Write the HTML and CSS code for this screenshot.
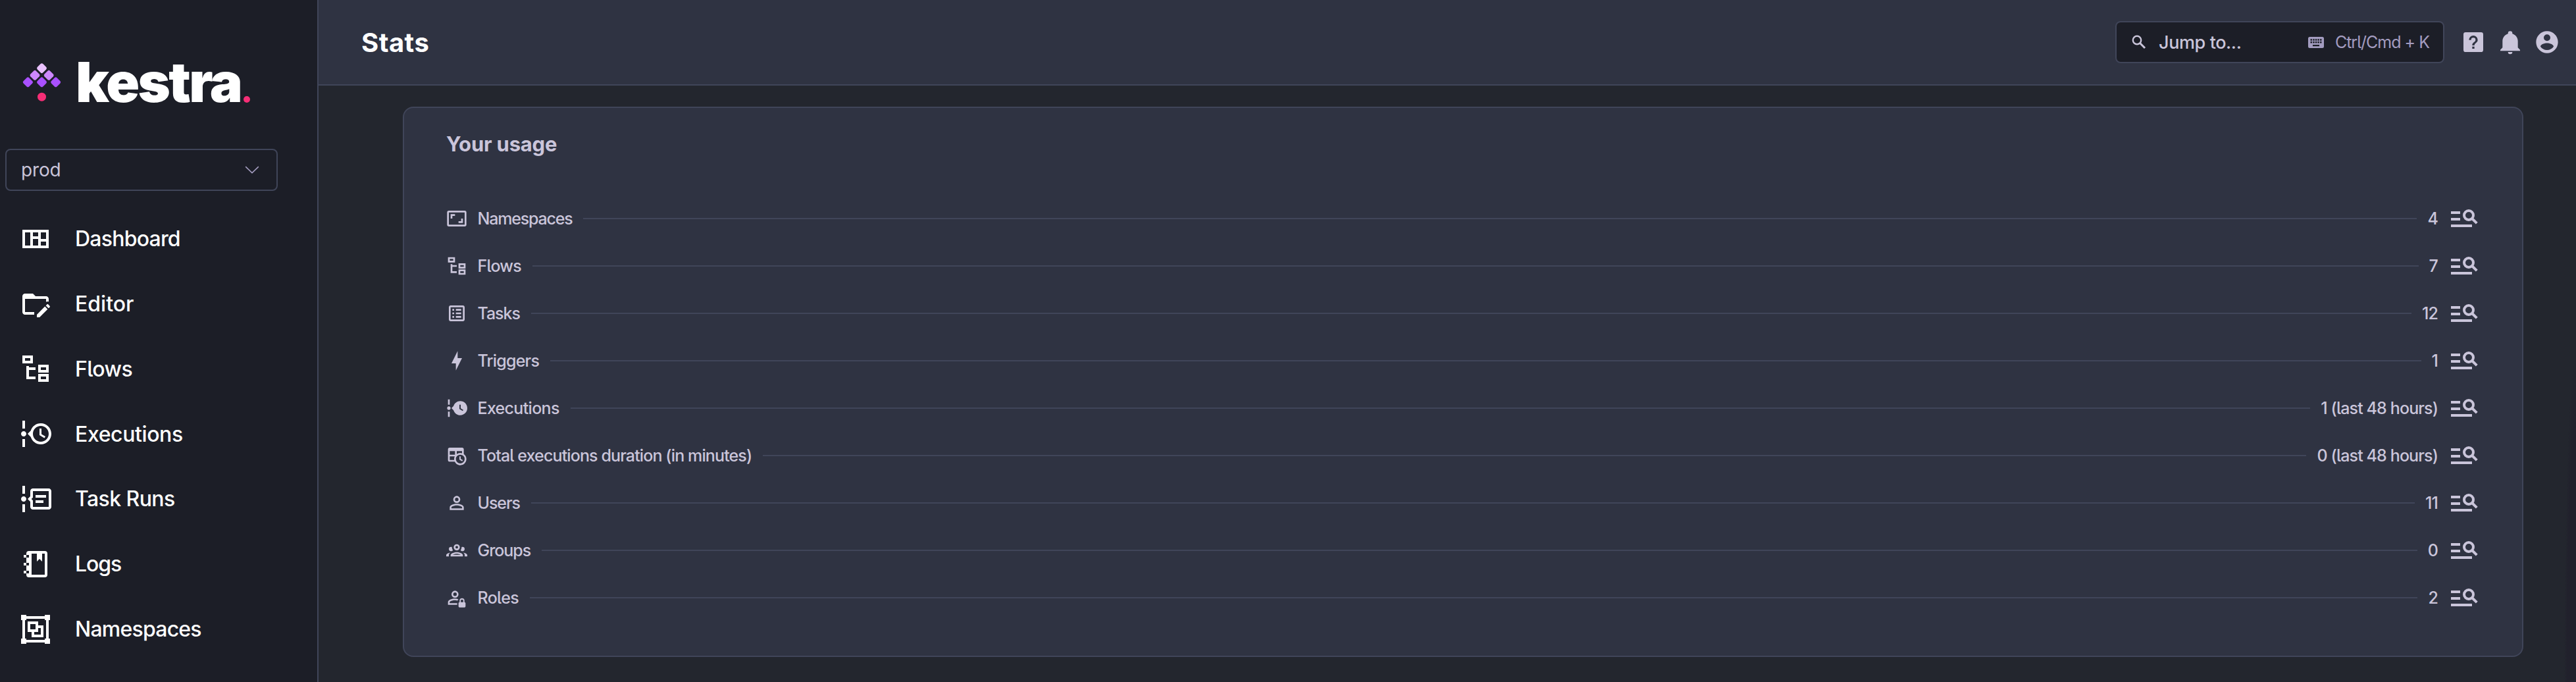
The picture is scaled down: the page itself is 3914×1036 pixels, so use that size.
FILE: index.html
```html
<!DOCTYPE html>
<html lang="en">
<head>
<meta charset="utf-8">
<title>Stats</title>
<link rel="stylesheet" href="styles.css">
</head>
<body>
<svg class="sprite" aria-hidden="true">
  <symbol id="i-tree" viewBox="0 0 24 24"><path d="M12 13H7V18H12V20H5V10H7V11H12V13M8 4V6H4V4H8M10 2H2V8H10V2M20 11V13H16V11H20M22 9H14V15H22V9M20 18V20H16V18H20M22 16H14V22H22V16Z"/></symbol>
  <symbol id="i-find" viewBox="0 0 44 36"><path d="M0 7H14V11H0ZM0 17H14V21H0ZM0 27H32V31H0Z"/><circle cx="27" cy="13" r="7" fill="none" stroke="currentColor" stroke-width="4"/><path d="M32 18L39.3 25.2" fill="none" stroke="currentColor" stroke-width="4"/></symbol>
</svg>
<div class="app">
  <aside class="sidebar">
    <div class="logo">
      <svg class="mark" viewBox="0 0 60 62">
        <g fill="#e9c1ff"><rect x="-6" y="-6" width="12" height="12" rx="2.6" transform="translate(29.5 9.7) rotate(45)"/></g>
        <g fill="#cd88ff"><rect x="-6" y="-6" width="12" height="12" rx="2.6" transform="translate(19 20.3) rotate(45)"/><rect x="-6" y="-6" width="12" height="12" rx="2.6" transform="translate(40.2 20.3) rotate(45)"/></g>
        <g fill="#a950ff"><rect x="-6" y="-6" width="12" height="12" rx="2.6" transform="translate(8.4 30.8) rotate(45)"/><rect x="-6" y="-6" width="12" height="12" rx="2.6" transform="translate(29.5 30.8) rotate(45)"/><rect x="-6" y="-6" width="12" height="12" rx="2.6" transform="translate(50.7 30.8) rotate(45)"/></g>
        <circle cx="29.5" cy="53.2" r="6.5" fill="#f62e76"/>
      </svg>
      <span class="wordmark">kestra</span><span class="dot"></span>
    </div>
    <div class="select"><span>prod</span><svg viewBox="0 0 22 12"><path d="M1.2 1.2L11 10.6L20.8 1.2"/></svg></div>
    <nav class="menu">
      <a><svg viewBox="0 0 24 24"><path fill-rule="evenodd" d="M2 5H22V19H2ZM4 7V17H8V7ZM10 7V10H14V7ZM10 12V17H14V12ZM16 7V12H20V7ZM16 14V17H20V14Z"/></svg><span>Dashboard</span></a>
      <a><svg viewBox="0 0 24 24"><path d="M4 18H11V20H4C2.9 20 2 19.11 2 18V6C2 4.89 2.89 4 4 4H10L12 6H20C21.1 6 22 6.89 22 8V10.17C21.74 10.06 21.46 10 21.17 10C20.75 10 20.36 10.11 20 10.3V8H4V18M22.85 14.19L21.87 15.17L19.83 13.13L20.81 12.15C21 11.95 21.33 11.95 21.53 12.15L22.85 13.47C23.05 13.67 23.05 14 22.85 14.19M13 19.94L19.12 13.81L21.16 15.85L15.04 22H13V19.94Z"/></svg><span>Editor</span></a>
      <a><svg viewBox="0 0 24 24"><use href="#i-tree"/></svg><span>Flows</span></a>
      <a><svg viewBox="0 0 24 24"><path d="M4 2V8H2V2H4M2 22V16H4V22H2M5 12C5 13.11 4.11 14 3 14C1.9 14 1 13.11 1 12C1 10.9 1.9 10 3 10C4.11 10 5 10.9 5 12M16 4C20.42 4 24 7.58 24 12C24 16.42 20.42 20 16 20C12.4 20 9.36 17.62 8.35 14.35L6 12L8.35 9.65C9.36 6.38 12.4 4 16 4M16 6C12.69 6 10 8.69 10 12C10 15.31 12.69 18 16 18C19.31 18 22 15.31 22 12C22 8.69 19.31 6 16 6M15 13V8H16.5V12.2L19.5 14L18.72 15.26L15 13Z"/></svg><span>Executions</span></a>
      <a><svg viewBox="0 0 24 24"><path d="M5 12C5 13.11 4.11 14 3 14C1.9 14 1 13.11 1 12C1 10.9 1.9 10 3 10C4.11 10 5 10.9 5 12M4 2V8H2V2H4M2 22V16H4V22H2M24 6V18C24 19.11 23.11 20 22 20H10C8.89 20 8 19.11 8 18V14L6 12L8 10V6C8 4.89 8.89 4 10 4H22C23.11 4 24 4.89 24 6M10 6V10.83L8.83 12L10 13.17V18H22V6H10M12 9H20V11H12V9M12 13H18V15H12V13Z"/></svg><span>Task Runs</span></a>
      <a><svg viewBox="0 0 24 24"><path fill-rule="evenodd" d="M7 2H19A2 2 0 0 1 21 4V20A2 2 0 0 1 19 22H7A2 2 0 0 1 5 20V19H7V17H5V13H7V11H5V7H7V5H5V4A2 2 0 0 1 7 2ZM9 4V20H19V4H17V10L15 8L13 10V4ZM3 5H5V7H3ZM3 11H5V13H3ZM3 17H5V19H3Z"/></svg><span>Logs</span></a>
      <a><svg viewBox="0 0 24 24"><path fill-rule="evenodd" d="M1 1V5H2V19H1V23H5V22H19V23H23V19H22V5H23V1H19V2H5V1ZM5 4H19V5H20V19H19V20H5V19H4V5H5ZM6 6V14H9V18H18V9H14V6ZM8 8H12V12H8ZM14 11H16V16H11V14H14Z"/></svg><span>Namespaces</span></a>
    </nav>
  </aside>
  <main class="main">
    <header class="topbar">
      <h1>Stats</h1>
      <div class="search">
        <svg class="glass" viewBox="0 0 22 22"><circle cx="8" cy="8" r="6.2" fill="none" stroke="currentColor" stroke-width="2.4"/><path d="M12.5 12.5L20 20" stroke="currentColor" stroke-width="3"/></svg>
        <span class="jump">Jump to...</span>
        <svg class="keys" viewBox="0 0 24 17"><path fill-rule="evenodd" d="M2.5 0H21.5A2.5 2.5 0 0 1 24 2.5V14.5A2.5 2.5 0 0 1 21.5 17H2.5A2.5 2.5 0 0 1 0 14.5V2.5A2.5 2.5 0 0 1 2.5 0ZM3.5 3.3V5.8H6V3.3ZM7.2 3.3V5.8H9.7V3.3ZM10.8 3.3V5.8H13.3V3.3ZM14.4 3.3V5.8H16.9V3.3ZM18 3.3V5.8H20.5V3.3ZM3.5 7V9.5H6V7ZM7.2 7V9.5H9.7V7ZM10.8 7V9.5H13.3V7ZM14.4 7V9.5H16.9V7ZM18 7V9.5H20.5V7ZM7 12V14.3H17V12Z"/></svg>
        <span class="hint">Ctrl/Cmd + K</span>
      </div>
      <div class="actions">
        <svg viewBox="0 0 24 24"><path fill-rule="evenodd" d="M5 3H19A2 2 0 0 1 21 5V19A2 2 0 0 1 19 21H5A2 2 0 0 1 3 19V5A2 2 0 0 1 5 3ZM11 18H13V16H11ZM12 6A4 4 0 0 0 8 10H10A2 2 0 0 1 12 8A2 2 0 0 1 14 10C14 12 11 11.75 11 15H13C13 12.75 16 12.5 16 10A4 4 0 0 0 12 6Z"/></svg>
        <svg viewBox="0 0 24 24"><path d="M21,19V20H3V19L5,17V11C5,7.9 7.03,5.17 10,4.29C10,4.19 10,4.1 10,4A2,2 0 0,1 12,2A2,2 0 0,1 14,4C14,4.1 14,4.19 14,4.29C16.97,5.17 19,7.9 19,11V17L21,19M14,21A2,2 0 0,1 12,23A2,2 0 0,1 10,21"/></svg>
        <svg viewBox="0 0 24 24"><path d="M12,19.2C9.5,19.2 7.29,17.92 6,16C6.03,14 10,12.9 12,12.9C14,12.9 17.97,14 18,16C16.71,17.92 14.5,19.2 12,19.2M12,5A3,3 0 0,1 15,8A3,3 0 0,1 12,11A3,3 0 0,1 9,8A3,3 0 0,1 12,5M12,2A10,10 0 0,0 2,12A10,10 0 0,0 12,22A10,10 0 0,0 22,12C22,6.47 17.5,2 12,2Z"/></svg>
      </div>
    </header>
    <section class="content">
      <div class="card">
        <h2>Your usage</h2>
        <div class="rows">
          <div class="row"><svg viewBox="0 0 24 24"><path d="M19,12H17V15H14V17H19V12M7,9H10V7H5V12H7V9M21,3H3A2,2 0 0,0 1,5V19A2,2 0 0,0 3,21H21A2,2 0 0,0 23,19V5A2,2 0 0,0 21,3M21,19H3V5H21V19Z"/></svg><span class="label">Namespaces</span><i></i><span class="value">4</span><svg class="find"><use href="#i-find"/></svg></div>
          <div class="row"><svg viewBox="0 0 24 24"><use href="#i-tree"/></svg><span class="label">Flows</span><i></i><span class="value">7</span><svg class="find"><use href="#i-find"/></svg></div>
          <div class="row"><svg viewBox="0 0 24 24"><path d="M11 15H17V17H11V15M9 7H7V9H9V7M11 13H17V11H11V13M11 9H17V7H11V9M9 11H7V13H9V11M21 5V19C21 20.1 20.1 21 19 21H5C3.89 21 3 20.1 3 19V5C3 3.9 3.9 3 5 3H19C20.1 3 21 3.9 21 5M19 5H5V19H19V5M9 15H7V17H9V15Z"/></svg><span class="label">Tasks</span><i></i><span class="value">12</span><svg class="find"><use href="#i-find"/></svg></div>
          <div class="row"><svg viewBox="0 0 24 24"><path d="M11 15H6L13 1V9H18L11 23V15Z"/></svg><span class="label">Triggers</span><i></i><span class="value">1</span><svg class="find"><use href="#i-find"/></svg></div>
          <div class="row"><svg viewBox="0 0 24 24"><path fill-rule="evenodd" d="M4 2V8H2V2H4M2 22V16H4V22H2M5 12C5 13.11 4.11 14 3 14C1.9 14 1 13.11 1 12C1 10.9 1.9 10 3 10C4.11 10 5 10.9 5 12M16 4C20.42 4 24 7.58 24 12C24 16.42 20.42 20 16 20C12.4 20 9.36 17.62 8.35 14.35L6 12L8.35 9.65C9.36 6.38 12.4 4 16 4M15 13L18.72 15.26L19.5 14L16.5 12.2V8H15V13Z"/></svg><span class="label">Executions</span><i></i><span class="value">1 (last 48 hours)</span><svg class="find"><use href="#i-find"/></svg></div>
          <div class="row"><svg viewBox="0 0 24 24"><path fill-rule="evenodd" d="M4 3H18A2 2 0 0 1 20 5V10.25A7 7 0 1 1 9.67 19H4A2 2 0 0 1 2 17V5A2 2 0 0 1 4 3ZM4 7V11H10V7ZM12 7V10.25A7 7 0 0 1 18 9.29V7ZM4 13V17H9.07A7 7 0 0 1 9.67 13ZM16 11A5 5 0 1 0 16 21A5 5 0 1 0 16 11ZM15 13H16.5V15.82L18.94 17.23L18.19 18.53L15 16.69Z"/></svg><span class="label">Total executions duration (in minutes)</span><i></i><span class="value">0 (last 48 hours)</span><svg class="find"><use href="#i-find"/></svg></div>
          <div class="row"><svg viewBox="0 0 24 24"><path d="M12,4A4,4 0 0,1 16,8A4,4 0 0,1 12,12A4,4 0 0,1 8,8A4,4 0 0,1 12,4M12,6A2,2 0 0,0 10,8A2,2 0 0,0 12,10A2,2 0 0,0 14,8A2,2 0 0,0 12,6M12,13C14.67,13 20,14.33 20,17V20H4V17C4,14.33 9.33,13 12,13M12,14.9C9.03,14.9 5.9,16.36 5.9,17V18.1H18.1V17C18.1,16.36 14.97,14.9 12,14.9Z"/></svg><span class="label">Users</span><i></i><span class="value">11</span><svg class="find"><use href="#i-find"/></svg></div>
          <div class="row"><svg viewBox="0 0 24 24"><path d="M12,5A3.5,3.5 0 0,0 8.5,8.5A3.5,3.5 0 0,0 12,12A3.5,3.5 0 0,0 15.5,8.5A3.5,3.5 0 0,0 12,5M12,7A1.5,1.5 0 0,1 13.5,8.5A1.5,1.5 0 0,1 12,10A1.5,1.5 0 0,1 10.5,8.5A1.5,1.5 0 0,1 12,7M5.5,8A2.5,2.5 0 0,0 3,10.5C3,11.44 3.53,12.25 4.29,12.68C4.65,12.88 5.06,13 5.5,13C5.94,13 6.35,12.88 6.71,12.68C7.08,12.47 7.39,12.17 7.62,11.81C6.89,10.86 6.5,9.7 6.5,8.5C6.5,8.41 6.5,8.31 6.5,8.22C6.2,8.08 5.86,8 5.5,8M18.5,8C18.14,8 17.8,8.08 17.5,8.22C17.5,8.31 17.5,8.41 17.5,8.5C17.5,9.7 17.11,10.86 16.38,11.81C16.5,12 16.63,12.15 16.78,12.3C16.94,12.45 17.1,12.58 17.29,12.68C17.65,12.88 18.06,13 18.5,13C18.94,13 19.35,12.88 19.71,12.68C20.47,12.25 21,11.44 21,10.5A2.5,2.5 0 0,0 18.5,8M12,14C9.66,14 5,15.17 5,17.5V19H19V17.5C19,15.17 14.34,14 12,14M4.71,14.55C2.78,14.78 0,15.76 0,17.5V19H3V17.07C3,16.06 3.69,15.22 4.71,14.55M19.29,14.55C20.31,15.22 21,16.06 21,17.07V19H24V17.5C24,15.76 21.22,14.78 19.29,14.55M12,16C13.53,16 15.24,16.5 16.23,17H7.77C8.76,16.5 10.47,16 12,16Z"/></svg><span class="label">Groups</span><i></i><span class="value">0</span><svg class="find"><use href="#i-find"/></svg></div>
          <div class="row"><svg viewBox="0 0 24 24"><path fill-rule="evenodd" d="M10 4A4 4 0 1 0 10 12A4 4 0 1 0 10 4ZM10 6A2 2 0 1 1 10 10A2 2 0 1 1 10 6ZM10 13C7.33 13 2 14.33 2 17V20H12.5V18.1H3.9V17C3.9 16.36 7.03 14.9 10 14.9C11 14.9 12 15.06 12.9 15.33C13.1 14.75 13.4 14.2 13.9 13.65C12.5 13.2 11.1 13 10 13ZM18 12.6A2.8 2.8 0 0 0 15.2 15.4V17A1.2 1.2 0 0 0 14 18.2V21.8A1.2 1.2 0 0 0 15.2 23H20.8A1.2 1.2 0 0 0 22 21.8V18.2A1.2 1.2 0 0 0 20.8 17V15.4A2.8 2.8 0 0 0 18 12.6ZM18 14A1.4 1.4 0 0 1 19.4 15.4V17H16.6V15.4A1.4 1.4 0 0 1 18 14Z"/></svg><span class="label">Roles</span><i></i><span class="value">2</span><svg class="find"><use href="#i-find"/></svg></div>
        </div>
      </div>
    </section>
  </main>
</div>
</body>
</html>
```
FILE: styles.css
```css
* { box-sizing: border-box; }
body { margin: 0; background: #23262e; color: #cac5da; font-family: "Inter", "Open Sans", sans-serif; font-feature-settings: "cv05"; }
svg { display: block; flex: none; fill: currentColor; }
.sprite { display: none; }
.app { display: flex; height: 1036px; overflow: hidden; }

.sidebar { width: 484px; flex: none; background: #1c1e27; border-right: 2px solid #404559; }
.logo { display: flex; align-items: center; height: 100px; margin: 75px 0 51px; padding-left: 34px; }
.mark { width: 60px; height: 62px; }
.wordmark { margin-left: 21px; width: 254px; font-size: 84px; font-weight: 900; line-height: 100px; letter-spacing: -2.7px; color: #fff; }
.dot { width: 10px; height: 10px; margin: 51px 0 0 1px; border-radius: 50%; background: #f62e76; }
.select { display: flex; align-items: center; justify-content: space-between; width: 414px; height: 64px; margin-left: 8px; padding: 0 26px 0 22px; border: 2px solid #404559; border-radius: 8px; font-size: 28px; letter-spacing: -0.17px; }
.select svg { width: 22px; height: 12px; fill: none; stroke: #a39cbf; stroke-width: 1.6; }
.menu { margin-top: 23.4px; }
.menu a { display: flex; align-items: center; gap: 36px; height: 98.8px; padding-left: 30px; color: #fff; font-size: 32px; font-weight: 500; letter-spacing: -0.78px; }
.menu svg { width: 48px; height: 48px; }
.menu a:nth-child(2) { letter-spacing: 0; }
.menu a:nth-child(3), .menu a:nth-child(5) { letter-spacing: -0.57px; }
.menu a:nth-child(4) { letter-spacing: -0.39px; }
.menu a:nth-child(6) { letter-spacing: -1.08px; }

.main { flex: 1; min-width: 0; background: radial-gradient(ellipse 18px 500px at 100% 100%, #21212c 75%, rgba(33, 33, 44, 0) 100%); }
.topbar { display: flex; align-items: center; height: 130px; padding: 0 24px 0 65px; background: #2f3342; border-bottom: 2px solid #404559; }
h1 { margin: 0 auto 0 0; font-size: 40px; font-weight: 700; letter-spacing: 0.45px; color: #fff; }
.search { display: flex; align-items: center; width: 500px; height: 64px; padding: 0 21px 0 23px; background: #1c1e27; border: 2px solid #404559; border-radius: 8px; }
.glass { width: 22px; height: 22px; }
.jump { margin: 0 auto 0 19px; font-size: 27px; font-weight: 450; letter-spacing: -0.4px; }
.keys { width: 24px; height: 17px; margin-right: 17px; color: #a39cc0; }
.hint { font-size: 25px; letter-spacing: -0.99px; color: #a39cc0; }
.actions { display: flex; gap: 16px; margin-left: 24px; }
.actions svg { width: 40px; height: 40px; }

.content { padding: 32px 80px 0 128px; }
.card { height: 836px; padding: 35px 64px 0; background: #2f3342; border: 2px solid #404559; border-radius: 16px; }
h2 { margin: 0 0 57px; font-size: 31px; font-weight: 700; line-height: 40px; letter-spacing: -0.2px; }
.row { display: flex; align-items: center; height: 72px; font-size: 25px; font-weight: 450; letter-spacing: -0.8px; white-space: nowrap; }
.row svg { width: 32px; height: 32px; }
.row .find { width: 44px; height: 36px; margin-left: 20px; }
.label { margin-left: 15.5px; }
.row i { flex: 1; height: 2px; margin: 0 16px 0 17px; background: #404559; }
.value { letter-spacing: -0.88px; }
.row:nth-child(1) .label { letter-spacing: -1.2px; }
.row:nth-child(3) .label, .row:nth-child(7) .label, .row:nth-child(8) .label { letter-spacing: -1.05px; }
.row:nth-child(5) .label, .row:nth-child(9) .label { letter-spacing: -0.68px; }
.row:nth-child(6) .label { letter-spacing: -0.88px; }
```
